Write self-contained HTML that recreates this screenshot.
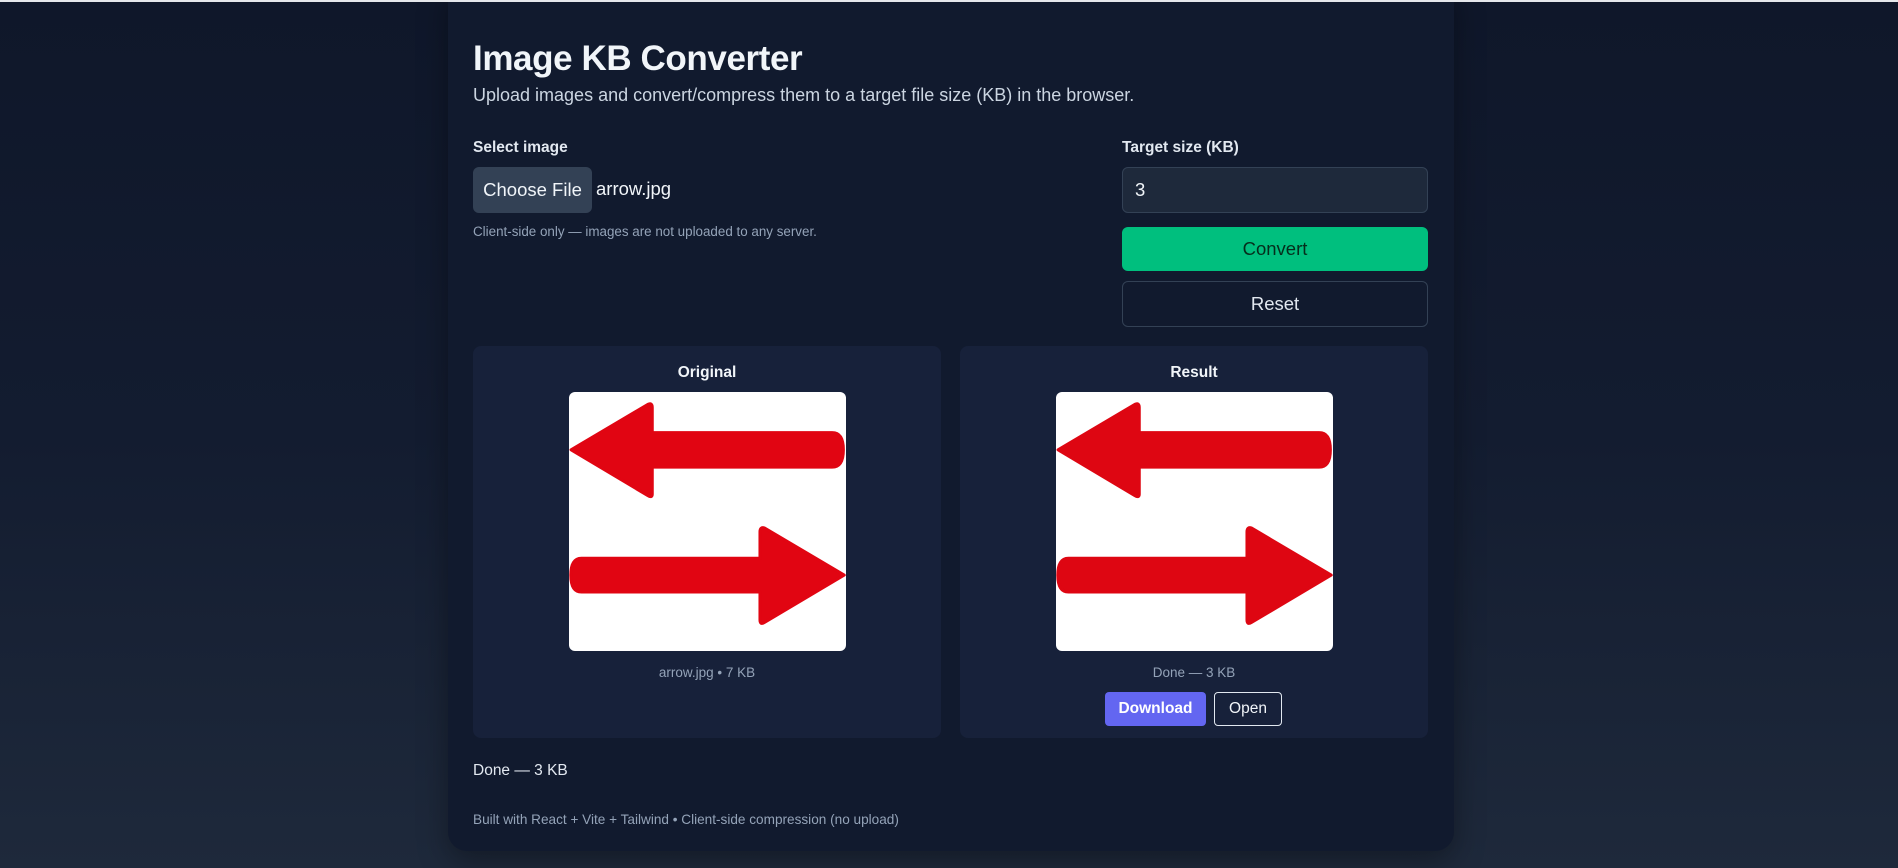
<!DOCTYPE html>
<html><head><meta charset="utf-8"><style>
*{box-sizing:border-box;margin:0;padding:0}
html,body{width:1898px;height:868px;overflow:hidden}
body{background:linear-gradient(180deg,#0f172a 0%,#131c30 50%,#1e293b 100%);font-family:"Liberation Sans",sans-serif;color:#e2e8f0;position:relative}
.topline{position:absolute;left:0;top:0;width:1898px;height:2px;background:#e5e7eb;z-index:5}
.card{position:absolute;left:448px;top:-20px;width:1006px;height:871px;background:#111a2e;border-radius:19px;box-shadow:0 10px 30px rgba(0,0,0,.35)}
.abs{position:absolute}
h1{position:absolute;left:473px;top:39px;font-size:35px;font-weight:bold;color:#f1f5f9;letter-spacing:-0.4px}
.sub{left:473px;top:85px;font-size:18px;color:#cbd5e1}
.lbl{font-size:15.5px;font-weight:bold;color:#e2e8f0}
.btn{position:absolute;border-radius:6px;display:flex;align-items:center;justify-content:center}
.panel{position:absolute;top:346px;width:468px;height:392px;background:#17213a;border-radius:8px}
.ptitle{position:absolute;top:18px;width:100%;text-align:center;font-size:15.5px;font-weight:bold;color:#f1f5f9}
.img{position:absolute;top:46px;left:96px;width:277px;height:259px;background:#fff;border-radius:6px;overflow:hidden}
.cap{position:absolute;top:319px;width:100%;text-align:center;font-size:13.5px;color:#94a3b8}
</style></head><body>
<div class="topline"></div>
<div class="card"></div>
<h1>Image KB Converter</h1>
<div class="abs sub">Upload images and convert/compress them to a target file size (KB) in the browser.</div>
<div class="abs lbl" style="left:473px;top:139px">Select image</div>
<div class="btn" style="left:473px;top:167px;width:119px;height:46px;background:#334155;color:#f1f5f9;font-size:18.5px">Choose File</div>
<div class="abs" style="left:596px;top:178px;font-size:18.5px;color:#f1f5f9">arrow.jpg</div>
<div class="abs" style="left:473px;top:224px;font-size:13.4px;color:#94a3b8">Client-side only — images are not uploaded to any server.</div>
<div class="abs lbl" style="left:1122px;top:139px">Target size (KB)</div>
<div class="btn" style="left:1122px;top:167px;width:306px;height:46px;background:#1e293b;border:1px solid #334155;justify-content:flex-start;padding-left:12px;font-size:18.5px;color:#f1f5f9">3</div>
<div class="btn" style="left:1122px;top:227px;width:306px;height:44px;background:#00bf7e;color:#052e1c;font-size:18.5px">Convert</div>
<div class="btn" style="left:1122px;top:281px;width:306px;height:46px;border:1px solid #334155;color:#e2e8f0;font-size:18.5px">Reset</div>

<div class="panel" style="left:473px">
<div class="ptitle">Original</div>
<div class="img" style="top:46px"><svg width="277" height="259" viewBox="0 0 100 100" preserveAspectRatio="none"><g fill="#e10512" stroke="#e10512" stroke-width="1.2" stroke-linejoin="round"><path d="M0.8 22.3 L28.5 4.8 Q30 4 30 6 L30 15.7 L95 15.7 Q99 15.7 99 22.3 Q99 29 95 29 L30 29 L30 39.5 Q30 41 28.5 40 Z"/><path d="M99.3 70.7 L70.5 52.5 Q69 52 69 54 L69 64.2 L4.5 64.2 Q0.7 64.2 0.7 70.7 Q0.7 77.2 4.5 77.2 L69 77.2 L69 88 Q69 90 70.5 89 Z"/></g></svg></div>
<div class="cap">arrow.jpg • 7 KB</div>
</div>
<div class="panel" style="left:960px">
<div class="ptitle">Result</div>
<div class="img" style="top:46px"><svg width="277" height="259" viewBox="0 0 100 100" preserveAspectRatio="none"><g fill="#de0612" stroke="#de0612" stroke-width="1.2" stroke-linejoin="round"><path d="M0.8 22.3 L28.5 4.8 Q30 4 30 6 L30 15.7 L95 15.7 Q99 15.7 99 22.3 Q99 29 95 29 L30 29 L30 39.5 Q30 41 28.5 40 Z"/><path d="M99.3 70.7 L70.5 52.5 Q69 52 69 54 L69 64.2 L4.5 64.2 Q0.7 64.2 0.7 70.7 Q0.7 77.2 4.5 77.2 L69 77.2 L69 88 Q69 90 70.5 89 Z"/></g></svg></div>
<div class="cap">Done — 3 KB</div>
<div class="btn" style="left:145px;top:346px;width:101px;height:34px;background:#6366f1;color:#fff;font-weight:bold;font-size:15.5px;border-radius:4px">Download</div>
<div class="btn" style="left:254px;top:346px;width:68px;height:34px;border:1.5px solid #e2e8f0;color:#f1f5f9;font-size:15.5px;border-radius:4px">Open</div>
</div>

<div class="abs" style="left:473px;top:762px;font-size:15.5px;color:#e2e8f0">Done — 3 KB</div>
<div class="abs" style="left:473px;top:812px;font-size:13.6px;color:#94a3b8">Built with React + Vite + Tailwind • Client-side compression (no upload)</div>
</body></html>
